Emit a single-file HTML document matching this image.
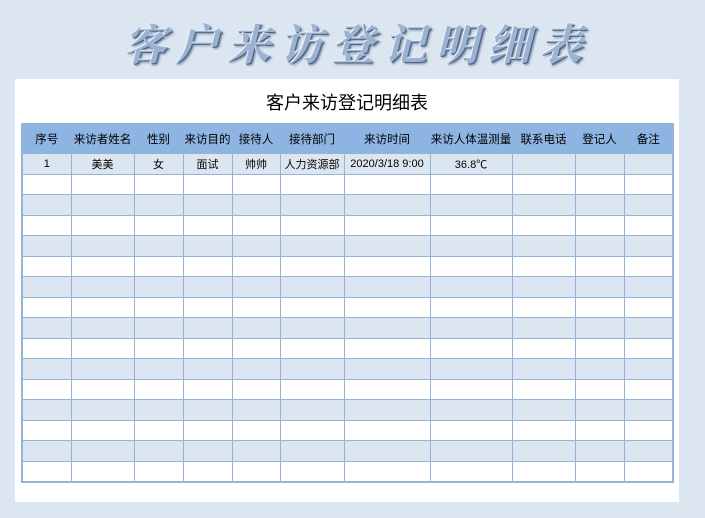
<!DOCTYPE html>
<html><head><meta charset="utf-8"><style>
body{margin:0;width:705px;height:518px;background:#dce6f1;position:relative;overflow:hidden;font-family:"Liberation Sans","Noto Sans CJK SC",sans-serif}
.big{position:absolute;left:0;width:715px;top:18px;text-align:center;font-family:"Noto Serif CJK SC",serif;font-size:43px;font-weight:bold;letter-spacing:9px;color:#9bb3d3;text-shadow:-1px -1px 0 #e8eef7,1px 1px 0 #50627e,2px 2px 2px #6f819c;line-height:50px;font-style:italic}
.panel{position:absolute;left:15px;top:79px;width:664px;height:423px;background:#fff}
.sub{position:absolute;left:0;width:664px;top:10px;text-align:center;font-size:18px;color:#000}
table{position:absolute;left:6px;top:44px;border-collapse:collapse;table-layout:fixed;border:2px solid #95b3d7}
td{border:1px solid #95b3d7;height:19.5px;padding:0;font-size:11px;text-align:center;white-space:nowrap;overflow:hidden}
tr.h td{height:28px;background:#8db4e2;font-size:11.5px}
tr.b td{background:#dce6f1}
</style></head><body>
<div class="big">客户来访登记明细表</div>
<div class="panel">
<div class="sub">客户来访登记明细表</div>
<table>
<colgroup><col style="width:49px"><col style="width:63px"><col style="width:49px"><col style="width:49px"><col style="width:48px"><col style="width:64px"><col style="width:86px"><col style="width:82px"><col style="width:63px"><col style="width:49px"><col style="width:49px"></colgroup>
<tr class="h"><td>序号</td><td>来访者姓名</td><td>性别</td><td>来访目的</td><td>接待人</td><td>接待部门</td><td>来访时间</td><td>来访人体温测量</td><td>联系电话</td><td>登记人</td><td>备注</td></tr>
<tr class="b"><td>1</td><td>美美</td><td>女</td><td>面试</td><td>帅帅</td><td>人力资源部</td><td>2020/3/18 9:00</td><td>36.8℃</td><td></td><td></td><td></td></tr>
<tr><td></td><td></td><td></td><td></td><td></td><td></td><td></td><td></td><td></td><td></td><td></td></tr>
<tr class="b"><td></td><td></td><td></td><td></td><td></td><td></td><td></td><td></td><td></td><td></td><td></td></tr>
<tr><td></td><td></td><td></td><td></td><td></td><td></td><td></td><td></td><td></td><td></td><td></td></tr>
<tr class="b"><td></td><td></td><td></td><td></td><td></td><td></td><td></td><td></td><td></td><td></td><td></td></tr>
<tr><td></td><td></td><td></td><td></td><td></td><td></td><td></td><td></td><td></td><td></td><td></td></tr>
<tr class="b"><td></td><td></td><td></td><td></td><td></td><td></td><td></td><td></td><td></td><td></td><td></td></tr>
<tr><td></td><td></td><td></td><td></td><td></td><td></td><td></td><td></td><td></td><td></td><td></td></tr>
<tr class="b"><td></td><td></td><td></td><td></td><td></td><td></td><td></td><td></td><td></td><td></td><td></td></tr>
<tr><td></td><td></td><td></td><td></td><td></td><td></td><td></td><td></td><td></td><td></td><td></td></tr>
<tr class="b"><td></td><td></td><td></td><td></td><td></td><td></td><td></td><td></td><td></td><td></td><td></td></tr>
<tr><td></td><td></td><td></td><td></td><td></td><td></td><td></td><td></td><td></td><td></td><td></td></tr>
<tr class="b"><td></td><td></td><td></td><td></td><td></td><td></td><td></td><td></td><td></td><td></td><td></td></tr>
<tr><td></td><td></td><td></td><td></td><td></td><td></td><td></td><td></td><td></td><td></td><td></td></tr>
<tr class="b"><td></td><td></td><td></td><td></td><td></td><td></td><td></td><td></td><td></td><td></td><td></td></tr>
<tr><td></td><td></td><td></td><td></td><td></td><td></td><td></td><td></td><td></td><td></td><td></td></tr>
</table>
</div>
</body></html>
